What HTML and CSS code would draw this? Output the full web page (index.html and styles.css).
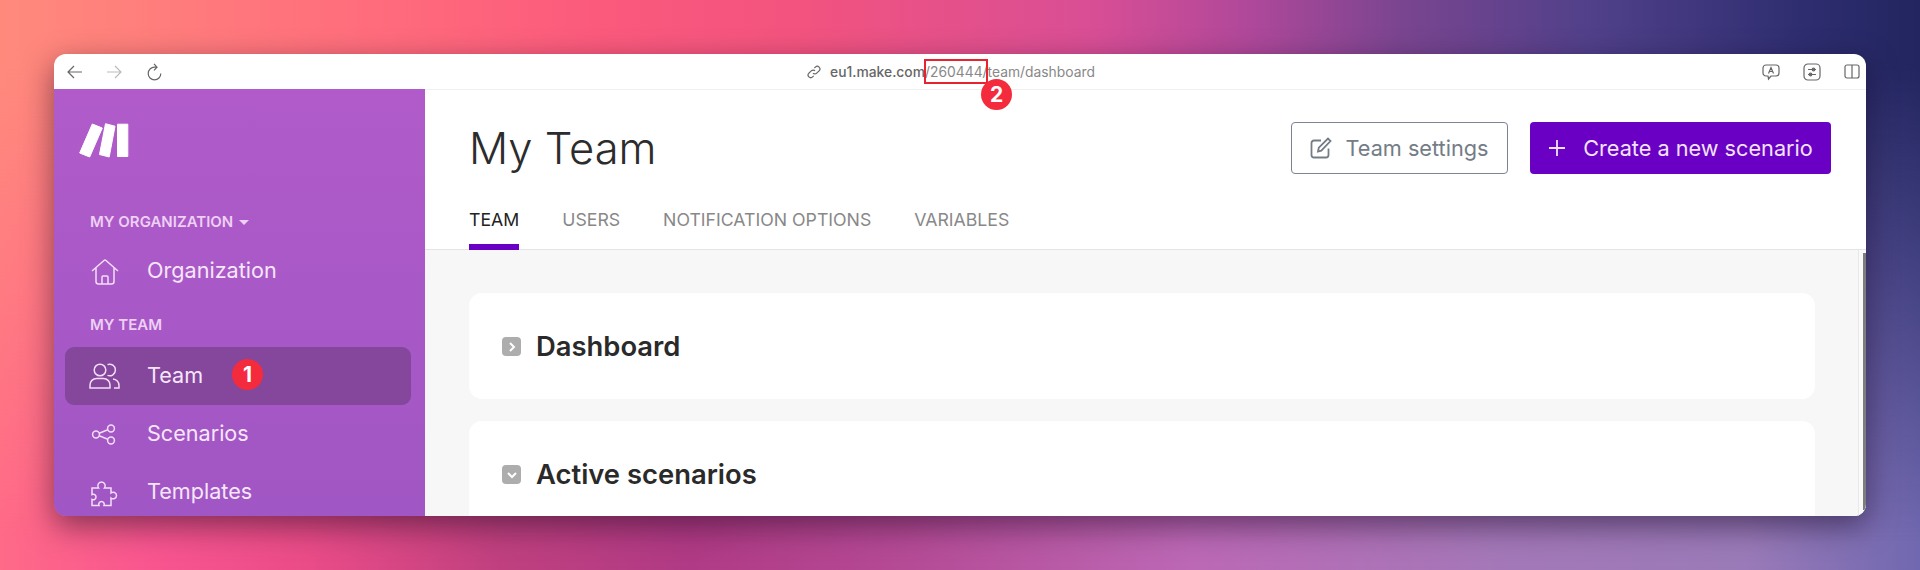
FILE: index.html
```html
<!doctype html>
<html>
<head>
	<meta name="viewport" content="width=device-width, initial-scale=1.0">
	<title>My Team</title>
	<link rel="stylesheet" href="styles.css">
</head>
<body>

	<div class="window">

		<div class="toolbar">
			<div class="nav-icons">
				<svg width="15" height="14" viewBox="0 0 15 14" class="ic-dark"><path d="M15 7H1M7 1L1 7l6 6"/></svg>
				<svg width="15" height="14" viewBox="0 0 15 14" class="ic-light"><path d="M0 7h14M8 1l6 6-6 6"/></svg>
				<svg width="15" height="18" viewBox="0 0 15 18" class="ic-dark"><path d="M13.800 10.500a6.300 6.300 0 1 1-6.300-6.300h2M7 .8l3 3.400-3 3.200"/></svg>
			</div>
			<div class="url">
				<svg width="14" height="14" viewBox="0 0 14 14" class="ic-dark"><path d="M6 8.200a2.600 2.600 0 0 0 3.700 0l2.400-2.400a2.600 2.600 0 0 0-3.700-3.700L7.300 3.200M8 5.800a2.600 2.600 0 0 0-3.700 0L1.900 8.200a2.600 2.600 0 0 0 3.700 3.700l1.100-1.100"/></svg>
				<span class="url-host">eu1.make.com</span><span class="url-path">/260444/team/dashboard</span>
			</div>
			<div class="tool-icons">
				<svg width="18" height="18" viewBox="0 0 18 18" class="ic-dark"><path d="M4 2h10a3 3 0 0 1 3 3v5a3 3 0 0 1-3 3h-5l-2.500 3-.5-3H4a3 3 0 0 1-3-3V5a3 3 0 0 1 3-3zM6.500 10.500L9 4.500l2.500 6M7.500 8.500h3"/></svg>
				<svg width="18" height="18" viewBox="0 0 18 18" class="ic-dark"><rect x="1" y="1" width="16" height="16" rx="4"/><path d="M5 6.500h8M5 11.500h8"/><circle cx="10.500" cy="6.500" r="1.300"/><circle cx="7.500" cy="11.500" r="1.300"/></svg>
				<svg width="16" height="15" viewBox="0 0 16 15" class="ic-dark"><rect x="1" y="1" width="14" height="13" rx="2"/><path d="M8 1v13"/></svg>
			</div>
		</div>

		<div class="app">

			<div class="sidebar">
				<svg class="logo" width="50" height="35" viewBox="0 0 50 35">
					<path d="M.7 30l10 4 12.600-29-10-4z"/>
					<path d="M20.500 31.500l9.700 2.500 5.800-30.800-9.500-2.500z"/>
					<path d="M38.500 1.200h10.300v32.300H38.500z"/>
				</svg>

				<div class="side-label side-label-org">MY ORGANIZATION <span class="caret"></span></div>
				<div class="side-item">
					<svg width="32" height="32" viewBox="0 0 32 32"><path d="M3 16L15 5.500a1.500 1.500 0 0 1 2 0L29 16M7 13v13.500A2.500 2.500 0 0 0 9.500 29h13a2.500 2.500 0 0 0 2.500-2.500V13M13 29v-7a1 1 0 0 1 1-1h4a1 1 0 0 1 1 1v7"/></svg>
					<span>Organization</span>
				</div>

				<div class="side-label side-label-team">MY TEAM</div>
				<div class="side-item active">
					<svg width="32" height="32" viewBox="0 0 32 32"><circle cx="11" cy="10" r="5.800"/><path d="M18.500 4.600a5.800 5.800 0 1 1 0 10.800M1 28v-3a6.500 6.500 0 0 1 6.500-6.500h7a6.500 6.500 0 0 1 6.500 6.500v3zM24 19a6.500 6.500 0 0 1 6 6.500V28h-5"/></svg>
					<span>Team</span>
				</div>
				<div class="side-item">
					<svg width="32" height="32" viewBox="0 0 32 32"><circle cx="7" cy="16.500" r="3.400"/><circle cx="22" cy="10.500" r="3.400"/><circle cx="22" cy="22.500" r="3.400"/><path d="M10.200 15.200l8.600-3.400M10.200 17.800l8.600 3.400"/></svg>
					<span>Scenarios</span>
				</div>
				<div class="side-item">
					<svg width="32" height="32" viewBox="0 0 32 32"><path d="M3 12h6.500c-1.500-2-.5-6 3-6s4.500 4 3 6H22v5c2-1.500 5.500-.5 5.500 2.500s-3.500 4-5.500 2.500v7.500h-7c.8-2-.5-4-2.500-4s-3.300 2-2.500 4H3v-6c2 1 4-.5 4-2.500s-2-3.500-4-2.500z"/></svg>
					<span>Templates</span>
				</div>
			</div>

			<div class="main">
				<div class="header">
					<div class="title-row">
						<h1>My Team</h1>
						<div class="actions">
							<div class="btn btn-outline">
								<svg width="22" height="22" viewBox="0 0 22 22"><path d="M11 3.500H4a2.500 2.500 0 0 0-2.500 2.500v12A2.500 2.500 0 0 0 4 20.500h12a2.500 2.500 0 0 0 2.500-2.500v-6.500M8 14.500l.8-3.800L18 1.500l2.500 2.500-9.200 9.700z"/></svg>
								Team settings
							</div>
							<div class="btn btn-primary">
								<svg width="18" height="18" viewBox="0 0 18 18"><path d="M9 1v16M1 9h16"/></svg>
								Create a new scenario
							</div>
						</div>
					</div>
					<div class="tabs">
						<div class="tab active">TEAM</div>
						<div class="tab">USERS</div>
						<div class="tab">NOTIFICATION OPTIONS</div>
						<div class="tab">VARIABLES</div>
					</div>
				</div>

				<div class="content-wrap">
					<div class="content">
						<div class="card card-short">
							<span class="toggle"><svg width="10" height="10" viewBox="0 0 10 10"><path d="M3 1l4 4-4 4"/></svg></span>
							<h2>Dashboard</h2>
						</div>
						<div class="card">
							<span class="toggle"><svg width="10" height="10" viewBox="0 0 10 10"><path d="M1 3l4 4 4-4"/></svg></span>
							<h2>Active scenarios</h2>
						</div>
					</div>
					<div class="gutter"></div>
					<div class="scroll-thumb"></div>
				</div>
			</div>

		</div>

		<!-- red annotations on top of the screenshot -->
		<div class="mark-box"></div>
		<div class="mark mark-url">2</div>
		<div class="mark mark-team">1</div>
	</div>

</body>
</html>
```

FILE: styles.css
```css
* {
	box-sizing: border-box;
}
body {
	margin: 0;
	height: 570px;
	padding: 54px;
	overflow: hidden;
	position: relative;
	font-family: Inter, "Liberation Sans", sans-serif;
	background: linear-gradient(90deg, #ff6a88 0%, #f8558f 8%, #ea4c88 16%, #c0407f 26%, #b03a85 36%, #b54a95 47%, #bc68b5 62%, #a478b8 78%, #9a7ab8 91%, #7068b0 100%);
}
/* top half of the wallpaper, faded out over the bottom colours */
body::before {
	content: "";
	position: absolute;
	top: 0;
	left: 0;
	right: 0;
	bottom: 0;
	background: linear-gradient(90deg, #ff8a7c 0%, #ff6a7c 21%, #fb5a7c 31%, #f2537f 42%, #d84e95 57%, #b0489a 65%, #7a4590 73%, #50408a 83%, #2e2d70 94%, #22255f 100%);
	-webkit-mask-image: linear-gradient(180deg, #000 12%, transparent 95%);
	mask-image: linear-gradient(180deg, #000 12%, transparent 95%);
}
.window {
	position: relative;
	height: 462px;
	border-radius: 12px;
	overflow: hidden;
	display: flex;
	flex-direction: column;
	box-shadow: 0 10px 30px rgba(20, 5, 30, 0.5);
}
.toolbar {
	height: 35px;
	flex: none;
	background: #fff;
	display: flex;
	align-items: center;
	position: relative;
	padding: 0 6px 0 13px;
	justify-content: space-between;
}
.toolbar svg {
	fill: none;
	stroke-width: 1.2;
}
.ic-dark {
	stroke: #666;
}
.ic-light {
	stroke: #bbb;
}
.nav-icons {
	display: flex;
	gap: 25px;
	align-items: center;
}
.tool-icons {
	display: flex;
	gap: 23px;
	align-items: center;
}
.url {
	display: flex;
	align-items: center;
	font-size: 13.85px;
	margin-right: 22px;
}
.url svg {
	margin-right: 9px;
}
.url-host {
	color: #666;
	font-weight: 500;
}
.url-path {
	color: #888;
}

.app {
	flex: 1;
	display: flex;
	min-height: 0;
}
.sidebar {
	width: 371px;
	flex: none;
	background: linear-gradient(180deg, #b15bca 0%, #a056c4 100%);
	padding: 34px 14px 0 11px;
	color: #f6e6fa;
}
.logo {
	display: block;
	margin-left: 14px;
	fill: #fff;
	stroke: #fff;
	stroke-width: 1;
	stroke-linejoin: round;
}
.side-label {
	font-size: 15px;
	font-weight: 600;
	color: #edd0f4;
	padding-left: 25px;
	line-height: 20px;
}
.side-label-org {
	margin-top: 54px;
	margin-bottom: 10px;
}
.side-label-team {
	margin-top: 15px;
	margin-bottom: 12px;
}
.caret {
	display: inline-block;
	width: 0;
	height: 0;
	margin-left: 2px;
	vertical-align: 2px;
	border-left: 5px solid transparent;
	border-right: 5px solid transparent;
	border-top: 5px solid #edd0f4;
}
.side-item {
	height: 58px;
	display: flex;
	align-items: center;
	padding-left: 24px;
	gap: 26px;
	font-size: 21.6px;
	border-radius: 9px;
}
.side-item span {
	padding-bottom: 3px;
}
.side-item svg {
	flex: none;
	fill: none;
	stroke: #f3def8;
	stroke-width: 1.5;
}
.side-item.active {
	background: #84479c;
}

.main {
	flex: 1;
	min-width: 0;
	display: flex;
	flex-direction: column;
	background: #fff;
}
.header {
	height: 161px;
	flex: none;
	border-bottom: 1px solid #e4e4e4;
	border-top: 1px solid #f0f0f0;
	padding: 32px 35px 0 44px;
	display: flex;
	flex-direction: column;
	justify-content: space-between;
}
.title-row {
	display: flex;
	justify-content: space-between;
	align-items: center;
}
h1 {
	margin: 0;
	font-size: 43.5px;
	font-weight: 300;
	color: #2c2c2c;
	line-height: 52px;
}
.actions {
	display: flex;
	gap: 22px;
}
.btn {
	height: 52px;
	display: flex;
	align-items: center;
	border-radius: 4px;
	font-size: 21.7px;
}
.btn-outline {
	width: 217px;
	justify-content: center;
	gap: 13px;
	border: 1px solid #7b8490;
	color: #747c86;
}
.btn-outline svg {
	fill: none;
	stroke: #747c86;
	stroke-width: 1.8;
}
.btn-primary {
	width: 301px;
	justify-content: center;
	gap: 17px;
	background: #6a00c4;
	color: #f1e3fb;
}
.btn-primary svg {
	fill: none;
	stroke: #f1e3fb;
	stroke-width: 1.8;
}
.tabs {
	display: flex;
	gap: 43px;
}
.tab {
	font-size: 17.7px;
	line-height: 24px;
	color: #888;
	padding-bottom: 12px;
	border-bottom: 6px solid transparent;
	margin-bottom: -1px;
}
.tab.active {
	color: #222;
	border-bottom-color: #6a00c4;
}

.content-wrap {
	flex: 1;
	min-height: 0;
	display: flex;
	position: relative;
	background: #f7f7f7;
	overflow: hidden;
}
.content {
	flex: 1;
	min-width: 0;
	padding: 43px 43px 0 44px;
	display: flex;
	flex-direction: column;
	gap: 22px;
}
.gutter {
	width: 8px;
	flex: none;
	border-left: 1px solid #e8e8e8;
	background: #fafafa;
}
.scroll-thumb {
	position: absolute;
	right: 0;
	top: 3px;
	bottom: 6px;
	width: 3px;
	background: #7d7d7d;
}
.card {
	background: #fff;
	border-radius: 13px;
	flex: none;
	height: 140px;
	display: flex;
	align-items: flex-start;
	padding: 40px 33px;
	gap: 15px;
}
.card-short {
	height: 106px;
}
.card h2 {
	margin: 0;
	font-size: 27.4px;
	font-weight: 600;
	color: #2a2a2a;
	line-height: 26px;
}
.toggle {
	width: 19px;
	height: 19px;
	margin-top: 4px;
	flex: none;
	background: #adadad;
	border-radius: 4px;
	display: flex;
	align-items: center;
	justify-content: center;
}
.toggle svg {
	fill: none;
	stroke: #fff;
	stroke-width: 2;
}

.mark-box {
	position: absolute;
	left: 870px;
	top: 5px;
	width: 64px;
	height: 25px;
	border: 2px solid #e8232f;
}
.mark {
	position: absolute;
	width: 31px;
	height: 31px;
	border-radius: 50%;
	background: #f42b3d;
	color: #fff;
	font-size: 21px;
	font-weight: 700;
	display: flex;
	align-items: center;
	justify-content: center;
}
.mark-url {
	left: 927px;
	top: 25px;
}
.mark-team {
	left: 178px;
	top: 305px;
}
```
